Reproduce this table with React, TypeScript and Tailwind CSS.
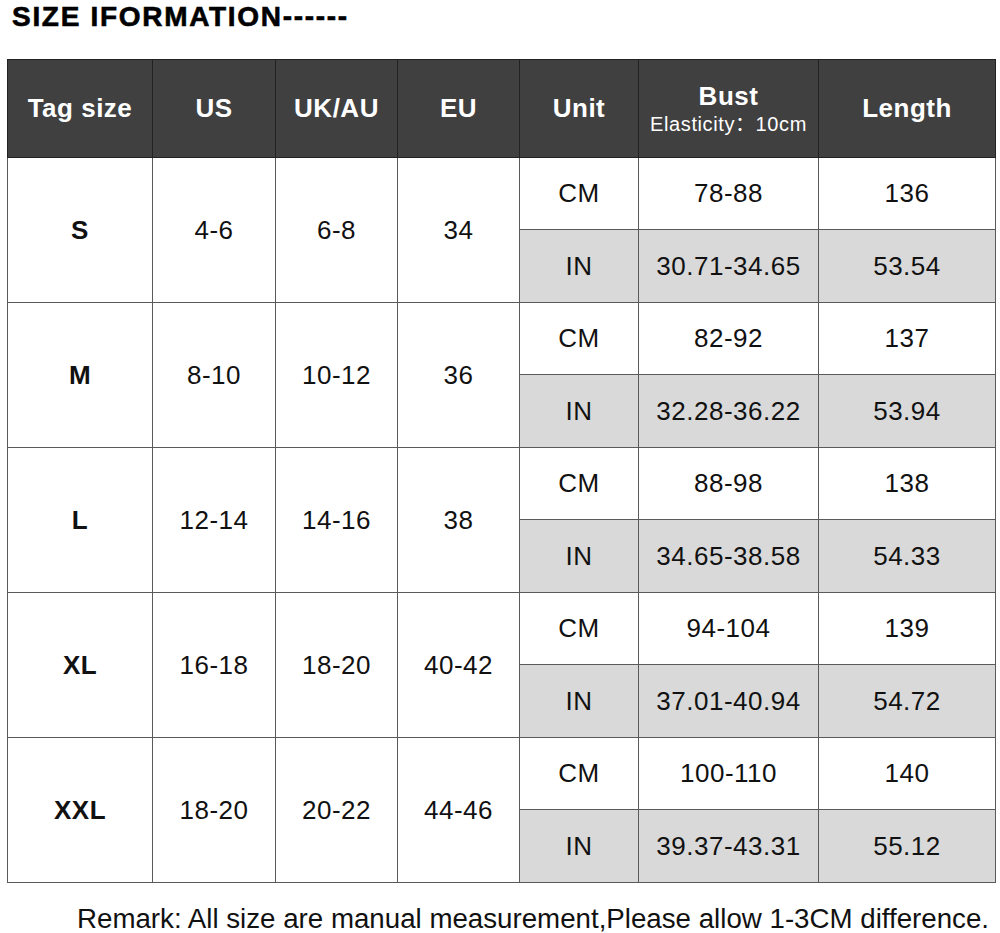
import React from 'react';

type SizeRow = {
  tag: string;
  us: string;
  uk: string;
  eu: string;
  bustCm: string;
  bustIn: string;
  lenCm: string;
  lenIn: string;
};

const rows: SizeRow[] = [
  { tag: 'S', us: '4-6', uk: '6-8', eu: '34', bustCm: '78-88', bustIn: '30.71-34.65', lenCm: '136', lenIn: '53.54' },
  { tag: 'M', us: '8-10', uk: '10-12', eu: '36', bustCm: '82-92', bustIn: '32.28-36.22', lenCm: '137', lenIn: '53.94' },
  { tag: 'L', us: '12-14', uk: '14-16', eu: '38', bustCm: '88-98', bustIn: '34.65-38.58', lenCm: '138', lenIn: '54.33' },
  { tag: 'XL', us: '16-18', uk: '18-20', eu: '40-42', bustCm: '94-104', bustIn: '37.01-40.94', lenCm: '139', lenIn: '54.72' },
  { tag: 'XXL', us: '18-20', uk: '20-22', eu: '44-46', bustCm: '100-110', bustIn: '39.37-43.31', lenCm: '140', lenIn: '55.12' }
];

const headCell = 'border border-[#222] bg-[#404040] text-white font-bold text-[26px] tracking-[0.5px] text-center align-middle';
const cell = 'border border-[#5a5a5a] text-center align-middle text-[26px] tracking-[0.5px] text-[#111]';
const grayCell = 'border border-[#5a5a5a] bg-[#d9d9d9] text-center align-middle text-[26px] tracking-[0.5px] text-[#111]';

const App = () => {
  return (
    <div className="w-[1000px] h-[933px] bg-white font-['Liberation_Sans','Noto_Sans_CJK_SC',Arial,sans-serif] overflow-hidden">
      <h1 className="pt-[3px] pl-[12px] text-[28px] leading-none font-bold tracking-[1.7px] text-black [-webkit-text-stroke:0.6px_black]">
        SIZE IFORMATION------
      </h1>

      <table className="mt-[28px] ml-[7px] w-[988px] table-fixed border-collapse">
        <colgroup>
          <col className="w-[145px]" />
          <col className="w-[123px]" />
          <col className="w-[122px]" />
          <col className="w-[122px]" />
          <col className="w-[119px]" />
          <col className="w-[180px]" />
          <col className="w-[177px]" />
        </colgroup>
        <thead>
          <tr className="h-[98px]">
            <th className={headCell}>Tag size</th>
            <th className={headCell}>US</th>
            <th className={headCell}>UK/AU</th>
            <th className={headCell}>EU</th>
            <th className={headCell}>Unit</th>
            <th className={headCell}>
              <div className="flex flex-col items-center leading-tight">
                <span>Bust</span>
                <span className="text-[20px] font-normal tracking-[0.6px]">Elasticity：10cm</span>
              </div>
            </th>
            <th className={headCell}>Length</th>
          </tr>
        </thead>
        <tbody>
          {rows.map((r) => (
            <React.Fragment key={r.tag}>
              <tr className="h-[72px]">
                <td rowSpan={2} className={cell + ' font-bold'}>
                  {r.tag}
                </td>
                <td rowSpan={2} className={cell}>
                  {r.us}
                </td>
                <td rowSpan={2} className={cell}>
                  {r.uk}
                </td>
                <td rowSpan={2} className={cell}>
                  {r.eu}
                </td>
                <td className={cell}>CM</td>
                <td className={cell}>{r.bustCm}</td>
                <td className={cell}>{r.lenCm}</td>
              </tr>
              <tr className="h-[73px]">
                <td className={grayCell}>IN</td>
                <td className={grayCell}>{r.bustIn}</td>
                <td className={grayCell}>{r.lenIn}</td>
              </tr>
            </React.Fragment>
          ))}
        </tbody>
      </table>

      <p className="mt-[22px] pl-[77px] text-[27.7px] leading-none text-[#111] whitespace-nowrap">
        Remark: All size are manual measurement,Please allow 1-3CM difference.
      </p>
    </div>
  );
};

export default App;
